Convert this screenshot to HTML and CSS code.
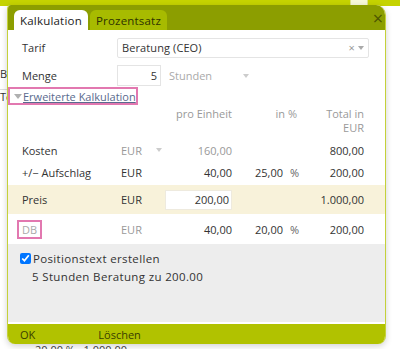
FILE: index.html
```html
<!DOCTYPE html>
<html lang="de">
<head>
    <meta charset="UTF-8">
    <title>Kalkulation</title>
    <link rel="stylesheet" href="styles.css">
</head>
<body>
    <div class="page">
        <div class="page-top">
            <span class="page-top-box"></span>
        </div>
        <div class="page-side">
            <span class="side-b">B</span>
            <span class="side-te">Te</span>
        </div>
        <div class="page-bottom">20,00 %&nbsp;&nbsp;&nbsp;1.000,00</div>
    </div>

    <div class="dialog">
        <div class="dialog-head">
            <div class="tabs">
                <span class="tab active">Kalkulation</span>
                <span class="tab">Prozentsatz</span>
            </div>
            <span class="close">&times;</span>
        </div>

        <div class="dialog-body">
            <div class="form-row">
                <label>Tarif</label>
                <div class="select wide">
                    <span>Beratung (CEO)</span>
                    <span class="select-icons"><span class="clear">&times;</span><span class="caret"></span></span>
                </div>
            </div>
            <div class="form-row">
                <label>Menge</label>
                <div class="qty">5</div>
                <div class="unit">Stunden <span class="caret"></span></div>
            </div>

            <div class="toggle">
                <span class="tri"></span><a href="#">Erweiterte Kalkulation</a>
            </div>

            <div class="calc head">
                <span></span>
                <span></span>
                <span class="num">pro Einheit</span>
                <span class="num pct-head">in %</span>
                <span class="num">Total in<br>EUR</span>
            </div>
            <div class="calc">
                <span>Kosten</span>
                <span class="muted cur">EUR <span class="caret"></span></span>
                <span class="num muted">160,00</span>
                <span class="num"></span>
                <span></span>
                <span class="num">800,00</span>
            </div>
            <div class="calc">
                <span>+/&minus; Aufschlag</span>
                <span>EUR</span>
                <span class="num">40,00</span>
                <span class="num">25,00</span>
                <span class="pct">%</span>
                <span class="num">200,00</span>
            </div>
            <div class="calc price">
                <span>Preis</span>
                <span>EUR</span>
                <span class="num"><span class="price-input">200,00</span></span>
                <span class="num"></span>
                <span></span>
                <span class="num">1.000,00</span>
            </div>
            <div class="calc db">
                <span><span class="db-box">DB</span></span>
                <span class="muted">EUR</span>
                <span class="num">40,00</span>
                <span class="num">20,00</span>
                <span class="pct">%</span>
                <span class="num">200,00</span>
            </div>

            <div class="postext">
                <label class="check"><input type="checkbox" checked> Positionstext erstellen</label>
                <p>5 Stunden Beratung zu 200.00</p>
            </div>
        </div>

        <div class="dialog-foot">
            <span class="ok">OK</span>
            <span>Löschen</span>
        </div>
    </div>
</body>
</html>
```

FILE: styles.css
```css
body {
    margin: 0;
    width: 400px;
    height: 349px;
    overflow: hidden;
    position: relative;
    background: #ffffff;
    font-family: 'Open Sans', 'Liberation Sans', sans-serif;
    font-size: 11px;
    color: #333333;
}

/* page behind the dialog */
.page-top {
    height: 6px;
    background: #c5d300;
    position: relative;
}

.page-top-box {
    position: absolute;
    left: 350px;
    top: 0;
    width: 16px;
    height: 5px;
    background: #f6f8d8;
    border: 1px solid #dde38a;
    border-top: none;
}

.page-side {
    position: absolute;
    left: 0;
    top: 67px;
    width: 7px;
    overflow: hidden;
    color: #333;
    font-size: 11px;
}

.side-b {
    display: block;
    line-height: 14px;
}

.side-te {
    display: block;
    line-height: 14px;
    margin-top: 8px;
    border-top: 1px solid #ddd;
}

.page-bottom {
    position: absolute;
    left: 35px;
    top: 342px;
    color: #444;
    font-size: 11px;
}

/* dialog */
.dialog {
    position: absolute;
    left: 7px;
    top: 5px;
    width: 379px;
    height: 339px;
    display: flex;
    flex-direction: column;
    background: #ffffff;
    border-left: 1px solid #c4d13a;
    border-right: 1px solid #c4d13a;
    border-radius: 4px 10px 8px 8px;
    box-shadow: 0 2px 6px rgba(0, 0, 0, 0.18);
    overflow: hidden;
    box-sizing: border-box;
}

.dialog-head {
    height: 25px;
    flex: none;
    background: #8c9e00;
    display: flex;
    align-items: flex-end;
    justify-content: space-between;
    padding-left: 6px;
}

.tabs {
    display: flex;
    gap: 2px;
}

.tab {
    height: 20px;
    line-height: 21px;
    padding: 0 6px;
    border-radius: 6px 6px 0 0;
    background: #a7bb00;
    color: #2e3300;
    font-size: 11.5px;
    letter-spacing: 0.2px;
}

.tab.active {
    background: #ffffff;
    color: #222;
}

.close {
    align-self: center;
    margin-right: 2px;
    color: #4c5600;
    font-size: 18px;
    line-height: 1;
}

.dialog-body {
    flex: 1;
    display: flex;
    flex-direction: column;
}

.form-row {
    display: flex;
    align-items: center;
    padding-left: 14px;
    margin-top: 7px;
    height: 21px;
}

.form-row + .form-row {
    margin-top: 7px;
}

.form-row label {
    width: 95px;
}

.select {
    height: 20px;
    box-sizing: border-box;
    border: 1px solid #e4e4e4;
    border-radius: 2px;
    display: flex;
    align-items: center;
    justify-content: space-between;
    padding: 0 4px 0 4px;
    color: #333;
    letter-spacing: 0.1px;
}

.select.wide {
    width: 252px;
}

.select-icons {
    display: flex;
    align-items: center;
    gap: 3px;
    color: #999;
}

.clear {
    font-size: 11px;
}

.caret {
    display: inline-block;
    width: 0;
    height: 0;
    border-left: 3.5px solid transparent;
    border-right: 3.5px solid transparent;
    border-top: 4px solid #aaa;
    vertical-align: middle;
}

.qty {
    width: 44px;
    height: 21px;
    box-sizing: border-box;
    border: 1px solid #e4e4e4;
    text-align: right;
    padding-right: 3px;
    line-height: 19px;
}

.unit {
    margin-left: 8px;
    width: 80px;
    color: #aaa;
    display: flex;
    justify-content: space-between;
    align-items: center;
}

.unit .caret {
    border-top-color: #ccc;
}

.toggle {
    margin-top: 1px;
    width: 130px;
    height: 18px;
    box-sizing: border-box;
    border: 2px solid #e278b0;
    display: flex;
    align-items: center;
    padding-left: 4px;
}

.tri {
    display: inline-block;
    border-left: 4px solid transparent;
    border-right: 4px solid transparent;
    border-top: 5px solid #b0b0b0;
    margin-right: 1px;
}

.toggle a {
    color: #5a6a8e;
    text-decoration: underline;
}

.calc {
    display: grid;
    grid-template-columns: 99px 44px 67px 51px 14px 67px;
    align-items: center;
    padding-left: 14px;
    height: 22px;
}

.calc .num {
    text-align: right;
}

.calc.head {
    margin-top: 2px;
    height: auto;
    align-items: start;
    color: #999;
    line-height: 14px;
    margin-bottom: 4px;
}

.pct-head {
    grid-column: 4 / 6;
}

.pct {
    padding-left: 7px;
    color: #666;
}

.muted {
    color: #999;
}

.cur {
    display: flex;
    align-items: center;
    gap: 14px;
}

.cur .caret {
    border-top-color: #ccc;
}

.calc.price {
    margin-top: 2px;
    height: 29px;
    background: #f8f2da;
}

.price-input {
    display: inline-block;
    width: 67px;
    height: 20px;
    box-sizing: border-box;
    background: #fff;
    border: 1px solid #eeeade;
    line-height: 18px;
    padding-right: 2px;
}

.calc.db {
    height: 30px;
}

.db-box {
    display: inline-block;
    margin-left: -5px;
    padding: 0 3px;
    border: 2px solid #e278b0;
    color: #aaa;
    line-height: 15px;
}

.postext {
    flex: 1;
    background: #ededed;
    border-bottom: 2px solid #ffffff;
    padding: 7px 0 0 12px;
    font-size: 11.5px;
    letter-spacing: 0.35px;
}

.check {
    display: flex;
    align-items: center;
    gap: 2px;
}

.check input {
    margin: 0;
    width: 11px;
    height: 11px;
}

.postext p {
    margin: 3px 0 0 12px;
}

.dialog-foot {
    height: 20px;
    flex: none;
    background: #b1c200;
    display: flex;
    align-items: center;
    padding-left: 12px;
    color: #3a4000;
    gap: 63px;
}
```
